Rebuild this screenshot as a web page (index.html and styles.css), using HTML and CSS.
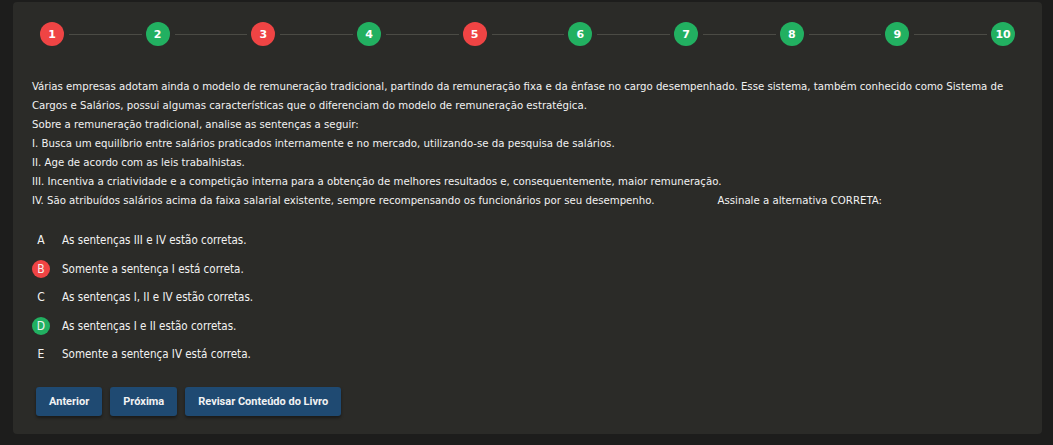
FILE: index.html
```html
<!DOCTYPE html>
<html lang="pt-BR">
<head>
<meta charset="utf-8">
<link rel="stylesheet" href="styles.css">
</head>
<body>
<div class="card">
  <div class="steps">
    <span class="step wrong">1</span><span class="line"></span>
    <span class="step right">2</span><span class="line"></span>
    <span class="step wrong">3</span><span class="line"></span>
    <span class="step right">4</span><span class="line"></span>
    <span class="step wrong">5</span><span class="line"></span>
    <span class="step right">6</span><span class="line"></span>
    <span class="step right">7</span><span class="line"></span>
    <span class="step right">8</span><span class="line"></span>
    <span class="step right">9</span><span class="line"></span>
    <span class="step right">10</span>
  </div>
  <div class="question">
    Várias empresas adotam ainda o modelo de remuneração tradicional, partindo da remuneração fixa e da ênfase no cargo desempenhado. Esse sistema, também conhecido como Sistema de<br>
    Cargos e Salários, possui algumas características que o diferenciam do modelo de remuneração estratégica.<br>
    Sobre a remuneração tradicional, analise as sentenças a seguir:<br>
    I. Busca um equilíbrio entre salários praticados internamente e no mercado, utilizando-se da pesquisa de salários.<br>
    II. Age de acordo com as leis trabalhistas.<br>
    III. Incentiva a criatividade e a competição interna para a obtenção de melhores resultados e, consequentemente, maior remuneração.<br>
    IV. São atribuídos salários acima da faixa salarial existente, sempre recompensando os funcionários por seu desempenho.<span class="gap"></span>Assinale a alternativa CORRETA:
  </div>
  <ul class="options">
    <li class="option"><span class="letter">A</span><span>As sentenças III e IV estão corretas.</span></li>
    <li class="option"><span class="letter wrong">B</span><span>Somente a sentença I está correta.</span></li>
    <li class="option"><span class="letter">C</span><span>As sentenças I, II e IV estão corretas.</span></li>
    <li class="option"><span class="letter right">D</span><span>As sentenças I e II estão corretas.</span></li>
    <li class="option"><span class="letter">E</span><span>Somente a sentença IV está correta.</span></li>
  </ul>
  <div class="actions">
    <button class="btn">Anterior</button>
    <button class="btn">Próxima</button>
    <button class="btn">Revisar Conteúdo do Livro</button>
  </div>
</div>
</body>
</html>
```
FILE: styles.css
```css
html, body {
  margin: 0;
  padding: 0;
  background: #1d1d1c;
}
body {
  padding: 2px 11px 0 13px;
  font-family: "DejaVu Sans Condensed", "DejaVu Sans", sans-serif;
  color: #f2f2f2;
}
.card {
  background: #2b2b28;
  border-radius: 4px;
  padding: 20px 27px 18px 19px;
  height: 432px;
  box-sizing: border-box;
}
.steps {
  display: flex;
  align-items: center;
  padding-left: 8px;
  height: 24px;
}
.step {
  width: 24px;
  height: 24px;
  border-radius: 50%;
  display: flex;
  align-items: center;
  justify-content: center;
  font-family: "DejaVu Sans", sans-serif;
  font-weight: bold;
  font-size: 11px;
  color: #fff;
  flex: none;
}
.step.wrong { background: #ef4444; }
.step.right { background: #22b061; }
.line {
  flex: 1;
  height: 1px;
  background: #4b4b45;
  margin: 0 4px 0 5px;
}
.question {
  margin-top: 31px;
  font-size: 11.32px;
  line-height: 19px;
  white-space: nowrap;
}
.gap {
  display: inline-block;
  width: 63px;
}
.options {
  list-style: none;
  margin: 16px 0 0 0;
  padding: 0;
}
.option {
  display: flex;
  align-items: center;
  height: 28.5px;
  font-size: 11.5px;
}
.letter {
  width: 18px;
  height: 18px;
  border-radius: 50%;
  display: flex;
  align-items: center;
  justify-content: center;
  margin-left: 0;
  margin-right: 12px;
  font-size: 12px;
}
.letter.wrong { background: #ef4444; }
.letter.right { background: #22b061; }
.actions {
  display: flex;
  gap: 8px;
  margin-top: 18px;
  padding-left: 4px;
}
.btn {
  font-family: Roboto, sans-serif;
  font-weight: bold;
  font-size: 11px;
  color: #f2f2f2;
  background: #1f4a72;
  border: none;
  border-radius: 3px;
  height: 29px;
  padding: 0 13px;
  box-shadow: 0 2px 3px rgba(0,0,0,0.4);
}
```
